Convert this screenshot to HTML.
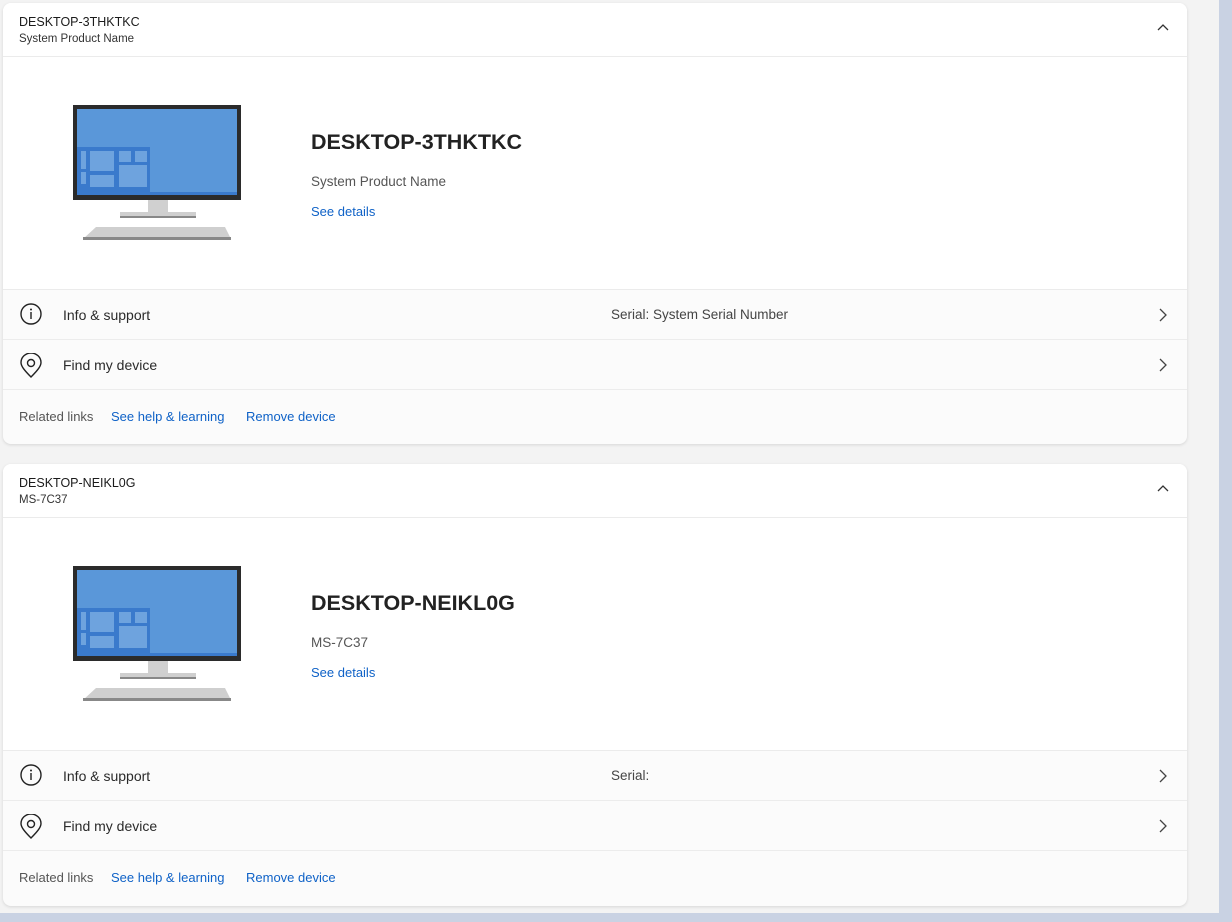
<!DOCTYPE html>
<html><head><style>
body{margin:0;width:1232px;height:922px;background:#c9d2e3;font-family:"Segoe UI","Liberation Sans",sans-serif;overflow:hidden;position:relative}
.bg{position:absolute;left:0;top:0;width:1219px;height:913px;background:#f3f3f3}
.card{position:absolute;left:3px;width:1184px;background:#fbfbfb;border-radius:8px;box-shadow:0 1px 3px rgba(0,0,0,.12);overflow:hidden}
.hdr{height:53px;background:#fff;border-bottom:1px solid #ebebeb;position:relative}
.hdr .t{position:absolute;left:16px;top:12px;font-size:12.5px;color:#1b1b1b}
.hdr .s{position:absolute;left:16px;top:30px;font-size:11.5px;color:#333}
.hdr svg{position:absolute;right:18px;top:20px}
.hero{height:232px;background:#fff;position:relative;border-bottom:1px solid #ebebeb}
.hero .mon{position:absolute;left:70px;top:48px}
.hero .n{position:absolute;left:308px;top:73px;font-size:21.5px;font-weight:bold;color:#222}
.hero .m{position:absolute;left:308px;top:117px;font-size:13.5px;color:#555}
.hero .d{position:absolute;left:308px;top:147px;font-size:13px;color:#0f62c7}
.row{height:49px;border-bottom:1px solid #ececec;position:relative;font-size:14px;color:#2a2a2a}
.row .l{position:absolute;left:60px;top:17px}
.row .ic{position:absolute;left:16px;top:13px}
.row .sr{position:absolute;left:608px;top:17px;color:#444;font-size:13.5px}
.row .ch{position:absolute;right:20px;top:18px}
.rel{height:54px;position:relative;font-size:13px}
.rel span{position:absolute;top:19px}
</style></head><body>
<div class="bg"></div>

<div class="card" style="top:3px;height:441px">
<div class="hdr"><div class="t">DESKTOP-3THKTKC</div><div class="s">System Product Name</div>
<svg width="12" height="8"><path d="M1 7 L6 2 L11 7" stroke="#333" stroke-width="1.3" fill="none"/></svg></div>
<div class="hero">
<svg class="mon" width="170" height="140"><rect x="0" y="0" width="168" height="95" fill="#2b2b2b"/><rect x="4" y="4" width="160" height="85" fill="#5a97d9"/><rect x="4" y="87" width="160" height="3" fill="#3a7acc"/><rect x="4" y="42" width="73" height="45" fill="#3a7acc"/><rect x="8" y="46" width="5" height="18" fill="#6ea3de"/><rect x="8" y="67" width="5" height="12" fill="#6ea3de"/><rect x="17" y="46" width="24" height="20" fill="#6ea3de"/><rect x="17" y="70" width="24" height="12" fill="#6ea3de"/><rect x="46" y="46" width="12" height="11" fill="#6ea3de"/><rect x="62" y="46" width="12" height="11" fill="#6ea3de"/><rect x="46" y="60" width="28" height="22" fill="#6ea3de"/><rect x="75" y="95" width="20" height="12" fill="#d0d0d0"/><rect x="47" y="107" width="76" height="6" fill="#cfcfcf"/><rect x="47" y="111" width="76" height="2" fill="#888"/><path d="M23 122 H152 L158 134 H10 Z" fill="#cfcfcf"/><rect x="10" y="132" width="148" height="3" fill="#888"/></svg>
<div class="n">DESKTOP-3THKTKC</div><div class="m">System Product Name</div><div class="d">See details</div></div>
<div class="row"><svg class="ic" width="24" height="24"><circle cx="12" cy="11" r="10" stroke="#222" stroke-width="1.4" fill="none"/><rect x="11.3" y="9" width="1.4" height="7" fill="#222"/><circle cx="12" cy="6.5" r="1" fill="#222"/></svg><span class="l">Info &amp; support</span><span class="sr">Serial: System Serial Number</span><svg class="ch" width="8" height="14"><path d="M1 1 L7 7 L1 13" stroke="#444" stroke-width="1.3" fill="none"/></svg></div>
<div class="row"><svg class="ic" width="24" height="26"><path d="M12 24 C5 17 2 13 2 9.5 A10 9.5 0 0 1 22 9.5 C22 13 19 17 12 24 Z" stroke="#222" stroke-width="1.4" fill="none"/><circle cx="12" cy="10" r="3.5" stroke="#222" stroke-width="1.4" fill="none"/></svg><span class="l">Find my device</span><svg class="ch" width="8" height="14"><path d="M1 1 L7 7 L1 13" stroke="#444" stroke-width="1.3" fill="none"/></svg></div>
<div class="rel"><span style="left:16px;color:#555">Related links</span><span style="left:108px;color:#0f62c7">See help &amp; learning</span><span style="left:243px;color:#0f62c7">Remove device</span></div>
</div>

<div class="card" style="top:464px;height:442px">
<div class="hdr"><div class="t">DESKTOP-NEIKL0G</div><div class="s">MS-7C37</div>
<svg width="12" height="8"><path d="M1 7 L6 2 L11 7" stroke="#333" stroke-width="1.3" fill="none"/></svg></div>
<div class="hero">
<svg class="mon" width="170" height="140"><rect x="0" y="0" width="168" height="95" fill="#2b2b2b"/><rect x="4" y="4" width="160" height="85" fill="#5a97d9"/><rect x="4" y="87" width="160" height="3" fill="#3a7acc"/><rect x="4" y="42" width="73" height="45" fill="#3a7acc"/><rect x="8" y="46" width="5" height="18" fill="#6ea3de"/><rect x="8" y="67" width="5" height="12" fill="#6ea3de"/><rect x="17" y="46" width="24" height="20" fill="#6ea3de"/><rect x="17" y="70" width="24" height="12" fill="#6ea3de"/><rect x="46" y="46" width="12" height="11" fill="#6ea3de"/><rect x="62" y="46" width="12" height="11" fill="#6ea3de"/><rect x="46" y="60" width="28" height="22" fill="#6ea3de"/><rect x="75" y="95" width="20" height="12" fill="#d0d0d0"/><rect x="47" y="107" width="76" height="6" fill="#cfcfcf"/><rect x="47" y="111" width="76" height="2" fill="#888"/><path d="M23 122 H152 L158 134 H10 Z" fill="#cfcfcf"/><rect x="10" y="132" width="148" height="3" fill="#888"/></svg>
<div class="n">DESKTOP-NEIKL0G</div><div class="m">MS-7C37</div><div class="d">See details</div></div>
<div class="row"><svg class="ic" width="24" height="24"><circle cx="12" cy="11" r="10" stroke="#222" stroke-width="1.4" fill="none"/><rect x="11.3" y="9" width="1.4" height="7" fill="#222"/><circle cx="12" cy="6.5" r="1" fill="#222"/></svg><span class="l">Info &amp; support</span><span class="sr">Serial:</span><svg class="ch" width="8" height="14"><path d="M1 1 L7 7 L1 13" stroke="#444" stroke-width="1.3" fill="none"/></svg></div>
<div class="row"><svg class="ic" width="24" height="26"><path d="M12 24 C5 17 2 13 2 9.5 A10 9.5 0 0 1 22 9.5 C22 13 19 17 12 24 Z" stroke="#222" stroke-width="1.4" fill="none"/><circle cx="12" cy="10" r="3.5" stroke="#222" stroke-width="1.4" fill="none"/></svg><span class="l">Find my device</span><svg class="ch" width="8" height="14"><path d="M1 1 L7 7 L1 13" stroke="#444" stroke-width="1.3" fill="none"/></svg></div>
<div class="rel"><span style="left:16px;color:#555">Related links</span><span style="left:108px;color:#0f62c7">See help &amp; learning</span><span style="left:243px;color:#0f62c7">Remove device</span></div>
</div>
</body></html>
